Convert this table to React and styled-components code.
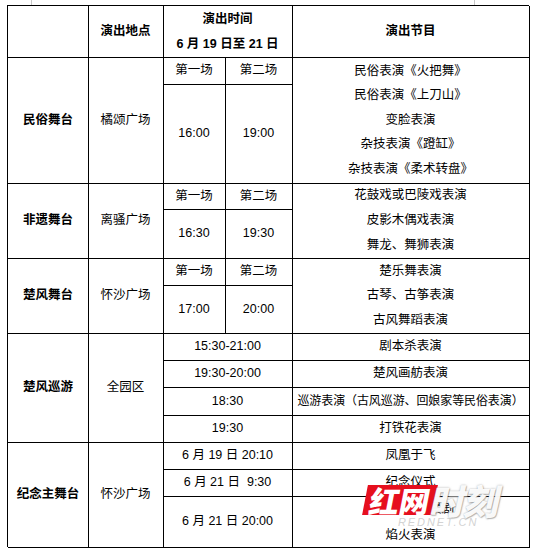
import React from "react";
import styled, { createGlobalStyle } from "styled-components";

const Global = createGlobalStyle`
  html, body { margin: 0; padding: 0; background: #fff; }
  body {
    font-family: "Liberation Sans", "Noto Sans CJK SC", sans-serif;
    color: #000;
  }
`;

const Page = styled.div`
  position: relative;
  width: 536px;
  height: 557px;
  background: #fff;
  overflow: hidden;
`;

const MarginBar = styled.div`
  display: flex;
  height: 5px;
  padding-left: 31px;
  padding-right: 61px;
`;

const Mark = styled.div`
  width: 1px;
  height: 5px;
  background: #c8c8c8;
  margin-left: ${(p) => (p.$right ? "auto" : "0")};
`;

const Grid = styled.div`
  margin-left: 7px;
  width: 522px;
  box-sizing: border-box;
  display: grid;
  grid-template-columns: 80px 75px 62px 67px 237px;
  grid-template-rows: 51px 27px 99px 26px 49px 27px 48px 27px 27px 28px 27px 27px 27px 51px;
  border-top: 1px solid #000;
  border-left: 1px solid #000;
`;

const Cell = styled.div`
  grid-column: ${(p) => p.$col};
  grid-row: ${(p) => p.$row};
  box-sizing: content-box;
  border-right: 1px solid #000;
  border-bottom: 1px solid #000;
  margin-right: -1px;
  margin-bottom: -1px;
  display: flex;
  flex-direction: column;
  align-items: center;
  justify-content: center;
  text-align: center;
  font-size: 12.5px;
  font-weight: ${(p) => (p.$bold ? 700 : 400)};
  line-height: ${(p) => p.$lh || "25px"};
  white-space: nowrap;
  color: #000;
`;

const Line = styled.div`
  letter-spacing: ${(p) => p.$ls || "0"};
  font-size: ${(p) => p.$fs || "inherit"};
`;

const Watermark = styled.div`
  position: absolute;
  left: 365px;
  top: 485px;
  display: flex;
  align-items: flex-start;
`;

const RedBox = styled.div`
  width: 70px;
  height: 30px;
  background: #e60f1e;
  transform: skewX(-11deg);
  display: flex;
  align-items: center;
  justify-content: center;
  color: #fff;
  font-family: "Noto Sans CJK SC", sans-serif;
  font-weight: 900;
  font-size: 30px;
  line-height: 30px;
  letter-spacing: 0;
`;

const Shiki = styled.div`
  margin-left: -3px;
  height: 30px;
  color: rgba(255, 255, 255, 0.94);
  font-family: "Noto Sans CJK SC", sans-serif;
  font-weight: 900;
  font-size: 35px;
  line-height: 30px;
  letter-spacing: -1px;
  transform: skewX(-13deg);
  text-shadow: 0 0 2px rgba(110, 110, 110, 0.55), 1px 1px 1px rgba(130, 130, 130, 0.5);
`;

const Rednet = styled.div`
  position: absolute;
  left: 398px;
  top: 516px;
  color: rgba(205, 205, 205, 0.9);
  font-family: "Liberation Sans", sans-serif;
  font-style: italic;
  font-size: 11px;
  letter-spacing: 1.9px;
`;

const stages = [
  { name: "民俗舞台", place: "橘颂广场", r: 2, t1: "16:00", t2: "19:00",
    items: ["民俗表演《火把舞》", "民俗表演《上刀山》", "变脸表演", "杂技表演《蹬缸》", "杂技表演《柔术转盘》"], lh: "24.6px" },
  { name: "非遗舞台", place: "离骚广场", r: 4, t1: "16:30", t2: "19:30",
    items: ["花鼓戏或巴陵戏表演", "皮影木偶戏表演", "舞龙、舞狮表演"], lh: "25px" },
  { name: "楚风舞台", place: "怀沙广场", r: 6, t1: "17:00", t2: "20:00",
    items: ["楚乐舞表演", "古琴、古筝表演", "古风舞蹈表演"], lh: "24.6px" },
];

const tours = [
  ["15:30-21:00", "剧本杀表演"],
  ["19:30-20:00", "楚风画舫表演"],
  ["18:30", "巡游表演（古风巡游、回娘家等民俗表演）"],
  ["19:30", "打铁花表演"],
];

export default function App() {
  return (
    <Page>
      <Global />
      <MarginBar>
        <Mark />
        <Mark $right />
      </MarginBar>
      <Grid>
        <Cell $col="1" $row="1" />
        <Cell $col="2" $row="1" $bold>演出地点</Cell>
        <Cell $col="3 / span 2" $row="1" $bold $lh="25px">
          <Line>演出时间</Line>
          <Line>6 月 19 日至 21 日</Line>
        </Cell>
        <Cell $col="5" $row="1" $bold>演出节目</Cell>

        {stages.map((s) => (
          <React.Fragment key={s.name}>
            <Cell $col="1" $row={`${s.r} / span 2`} $bold>{s.name}</Cell>
            <Cell $col="2" $row={`${s.r} / span 2`}>{s.place}</Cell>
            <Cell $col="3" $row={`${s.r}`}>第一场</Cell>
            <Cell $col="4" $row={`${s.r}`}>第二场</Cell>
            <Cell $col="3" $row={`${s.r + 1}`}>{s.t1}</Cell>
            <Cell $col="4" $row={`${s.r + 1}`}>{s.t2}</Cell>
            <Cell $col="5" $row={`${s.r} / span 2`} $lh={s.lh}>
              {s.items.map((it) => (
                <Line key={it}>{it}</Line>
              ))}
            </Cell>
          </React.Fragment>
        ))}

        <Cell $col="1" $row="8 / span 4" $bold>楚风巡游</Cell>
        <Cell $col="2" $row="8 / span 4">全园区</Cell>
        {tours.map(([t, p], i) => (
          <React.Fragment key={i}>
            <Cell $col="3 / span 2" $row={`${8 + i}`}>{t}</Cell>
            <Cell $col="5" $row={`${8 + i}`}>
              <Line $fs={p.length > 12 ? "12px" : undefined} $ls={p.length > 12 ? "-0.1px" : undefined}>{p}</Line>
            </Cell>
          </React.Fragment>
        ))}

        <Cell $col="1" $row="12 / span 3" $bold>纪念主舞台</Cell>
        <Cell $col="2" $row="12 / span 3">怀沙广场</Cell>
        <Cell $col="3 / span 2" $row="12">6 月 19 日 20:10</Cell>
        <Cell $col="5" $row="12">凤凰于飞</Cell>
        <Cell $col="3 / span 2" $row="13">6 月 21 日&nbsp;&nbsp;9:30</Cell>
        <Cell $col="5" $row="13">纪念仪式</Cell>
        <Cell $col="3 / span 2" $row="14">6 月 21 日 20:00</Cell>
        <Cell $col="5" $row="14" $lh="26px">
          <Line>《离骚》情景剧</Line>
          <Line>焰火表演</Line>
        </Cell>
      </Grid>
      <Watermark>
        <RedBox>红网</RedBox>
        <Shiki>时刻</Shiki>
      </Watermark>
      <Rednet>REDNET.CN</Rednet>
    </Page>
  );
}
